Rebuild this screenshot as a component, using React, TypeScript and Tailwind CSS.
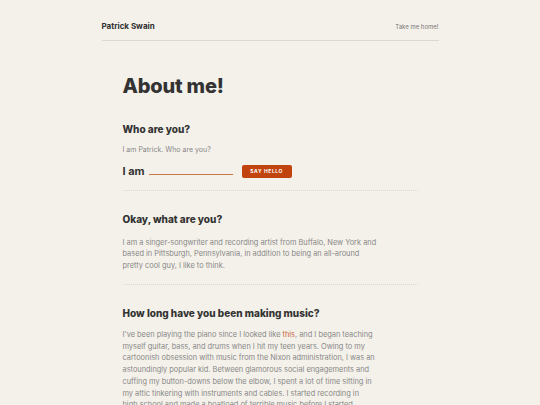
import React from "react";

export default function App() {
  return (
    <div className="min-h-[405px] bg-[#f4f1ea] text-[#333] overflow-hidden" style={{ fontFamily: "Inter, 'Open Sans', sans-serif" }}>
      <header className="mx-auto w-[337px] pt-[20px] flex items-center justify-between h-[41px] border-b border-[#dcd9d2] pb-[8px]">
        <span className="text-[8px] font-bold text-[#2f2f2f]">Patrick Swain</span>
        <span className="text-[6px] text-[#777]">Take me home!</span>
      </header>
      <main className="mx-auto w-[295px] pl-[0px]">
        <h1 className="mt-[30px] text-[20px] leading-[30px] font-extrabold text-[#333] tracking-[-0.2px]">About me!</h1>
        <section className="pt-[20px] pb-[10px] border-b border-dotted border-[#dcd9d2]">
          <h2 className="text-[10px] leading-[16px] font-extrabold text-[#333]">Who are you?</h2>
          <p className="mt-[7px] text-[7px] leading-[11px] text-[#888]">I am Patrick. Who are you?</p>
          <div className="mt-[8px] flex items-center">
            <span className="text-[11px] font-bold text-[#333]">I am</span>
            <div className="ml-[4px] mt-[6px] w-[84px] h-[1.5px] bg-[#c8764a]" />
            <button className="ml-[9px] w-[50px] h-[13px] rounded-[2px] bg-[#c1440e] text-white text-[5px] font-bold tracking-[0.6px] flex items-center justify-center">SAY HELLO</button>
          </div>
        </section>
        <section className="pt-[20px] pb-[13px] border-b border-dotted border-[#dcd9d2]">
          <h2 className="text-[10px] leading-[16px] font-extrabold text-[#333]">Okay, what are you?</h2>
          <p className="mt-[10px] w-[256px] text-[7.4px] leading-[11.5px] text-[#888]">I am a singer-songwriter and recording artist from Buffalo, New York and based in Pittsburgh, Pennsylvania, in addition to being an all-around pretty cool guy, I like to think.</p>
        </section>
        <section className="pt-[20px]">
          <h2 className="text-[10px] leading-[16px] font-extrabold text-[#333]">How long have you been making music?</h2>
          <p className="mt-[8px] w-[253.5px] text-[7.4px] leading-[11.7px] text-[#888]">I've been playing the piano since I looked like <a className="text-[#c8673a]">this</a>, and I began teaching myself guitar, bass, and drums when I hit my teen years. Owing to my cartoonish obsession with music from the Nixon administration, I was an astoundingly popular kid. Between glamorous social engagements and cuffing my button-downs below the elbow, I spent a lot of time sitting in my attic tinkering with instruments and cables. I started recording in high school and made a boatload of terrible music before I started</p>
        </section>
      </main>
    </div>
  );
}
